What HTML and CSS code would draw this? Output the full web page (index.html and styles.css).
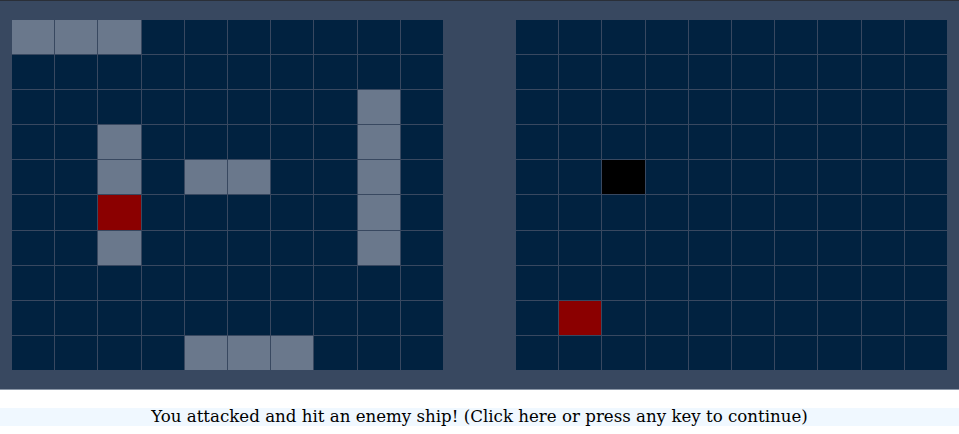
FILE: index.html
```html
<!DOCTYPE html>
<html>
<head>
<meta charset="utf-8">
<link rel="stylesheet" href="styles.css">
</head>
<body>
<div class="game">
  <div class="board" id="own"></div>
  <div class="board" id="enemy"></div>
</div>
<div class="message">You attacked and hit an enemy ship! (Click here or press any key to continue)</div>
<script>
function build(id, marks) {
  var b = document.getElementById(id);
  for (var r = 0; r < 10; r++) {
    for (var c = 0; c < 10; c++) {
      var d = document.createElement('div');
      d.className = 'cell' + (marks[r + ',' + c] ? ' ' + marks[r + ',' + c] : '');
      b.appendChild(d);
    }
  }
}
var own = {};
['0,0','0,1','0,2','2,8','3,8','4,8','5,8','6,8','3,2','4,2','6,2','4,4','4,5','9,4','9,5','9,6'].forEach(function(k){ own[k]='ship'; });
own['5,2'] = 'hit';
build('own', own);
build('enemy', {'4,2':'miss','8,1':'hit'});
</script>
</body>
</html>
```
FILE: styles.css
```css
html, body {
  margin: 0;
  padding: 0;
  background: #ffffff;
}
.game {
  border-top: 1px solid #2a2f38;
  border-bottom: 1px solid #8a96a6;
  background: #384860;
  padding: 19px 12px 19px 12px;
  display: flex;
  justify-content: space-between;
}
.board {
  width: 431px;
  height: 350px;
  display: grid;
  grid-template-columns: repeat(10, 1fr);
  grid-template-rows: repeat(10, 1fr);
  gap: 1px;
}
.cell {
  background: #012240;
}
.cell.ship {
  background: #6a788c;
}
.cell.hit {
  background: #8b0000;
}
.cell.miss {
  background: #000000;
}
.message {
  margin-top: 18px;
  background: #f0f8ff;
  text-align: center;
  font-family: "DejaVu Serif", serif;
  font-size: 16.65px;
  line-height: 18px;
}
```
